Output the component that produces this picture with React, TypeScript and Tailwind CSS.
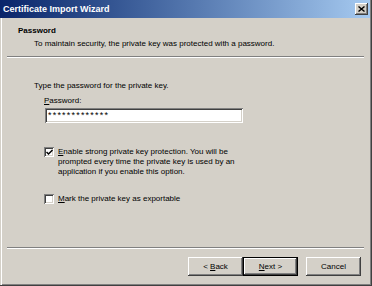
import React from "react";

const bevelOut =
  "shadow-[inset_-1px_-1px_0_#404040,inset_1px_1px_0_#ffffff,inset_-2px_-2px_0_#808080,inset_2px_2px_0_#d4d0c8]";
const bevelIn =
  "shadow-[inset_1px_1px_0_#808080,inset_-1px_-1px_0_#ffffff,inset_2px_2px_0_#404040,inset_-2px_-2px_0_#d4d0c8]";

function Separator() {
  return <div className="ml-[7px] mr-[8px] h-[2px] border-t border-b border-t-[#808080] border-b-white" />;
}

function Checkbox({ checked }: { checked?: boolean }) {
  return (
    <div className={`relative h-[10px] w-[10px] shrink-0 bg-white ${bevelIn}`}>
      {checked && (
        <svg className="absolute left-[2px] top-[2px]" width="7" height="7" viewBox="0 0 7 7">
          <path d="M0.5 3 L2.5 5 L6.5 1" stroke="#000" strokeWidth="1.5" fill="none" />
        </svg>
      )}
    </div>
  );
}

function Button({ children, def }: { children: React.ReactNode; def?: boolean }) {
  return (
    <div
      className={`flex h-[19px] w-[55px] items-center justify-center ${
        def
          ? "border border-black shadow-[inset_-1px_-1px_0_#404040,inset_1px_1px_0_#ffffff,inset_-2px_-2px_0_#808080]"
          : bevelOut
      }`}
    >
      <span className="leading-[10px]">{children}</span>
    </div>
  );
}

export default function App() {
  return (
    <div
      className="flex h-[286px] w-[372px] flex-col bg-[#d4d0c8] text-[8px] text-black shadow-[inset_-1px_-1px_0_#404040,inset_1px_0_0_#d4d0c8,inset_2px_0_0_#ffffff,inset_-2px_-2px_0_#808080]"
      style={{ fontFamily: '"Liberation Sans", Arial, sans-serif' }}
    >
      <div className="mr-[2px] flex h-[18px] items-center justify-between bg-gradient-to-r from-[#0a246a] to-[#a6caf0] pl-[3px] pr-[2px]">
        <span className="text-[9px] font-bold leading-[10px] text-white">Certificate Import Wizard</span>
        <div className={`flex h-[12px] w-[13px] items-center justify-center bg-[#d4d0c8] ${bevelOut}`}>
          <svg width="7" height="6" viewBox="0 0 7 6">
            <path d="M0.5 0.5 L6.5 5.5 M6.5 0.5 L0.5 5.5" stroke="#000" strokeWidth="1.4" />
          </svg>
        </div>
      </div>

      <div className="h-[38px] pl-[18px] pt-[8px]">
        <div className="font-bold leading-[10px]">Password</div>
        <div className="ml-[16px] mt-[3px] leading-[10px]">
          To maintain security, the private key was protected with a password.
        </div>
      </div>
      <Separator />

      <div className="flex flex-1 flex-col pl-[34px]">
        <div className="mt-[23px] leading-[10px]">Type the password for the private key.</div>
        <div className="ml-[10px] mt-[5px] leading-[10px]">
          <span className="underline">P</span>assword:
        </div>
        <div className={`ml-[11px] mt-[2px] flex h-[15px] w-[198px] items-center bg-white pl-[3px] ${bevelIn}`}>
          <span className="text-[9px] leading-[9px] tracking-[1.2px]">*************</span>
        </div>

        <div className="ml-[10px] mt-[24px] flex gap-[4px]">
          <Checkbox checked />
          <div className="w-[190px] leading-[10px]">
            <span className="underline">E</span>nable strong private key protection. You will be prompted every
            time the private key is used by an application if you enable this option.
          </div>
        </div>

        <div className="ml-[10px] mt-[17px] flex items-center gap-[4px]">
          <Checkbox />
          <div className="leading-[10px]">
            <span className="underline">M</span>ark the private key as exportable
          </div>
        </div>
      </div>

      <Separator />
      <div className="flex h-[37px] pl-[188px] pt-[8px]">
        <Button>
          &lt; <span className="underline">B</span>ack
        </Button>
        <Button def>
          <span className="underline">N</span>ext &gt;
        </Button>
        <div className="ml-[8px]">
          <Button>Cancel</Button>
        </div>
      </div>
    </div>
  );
}
